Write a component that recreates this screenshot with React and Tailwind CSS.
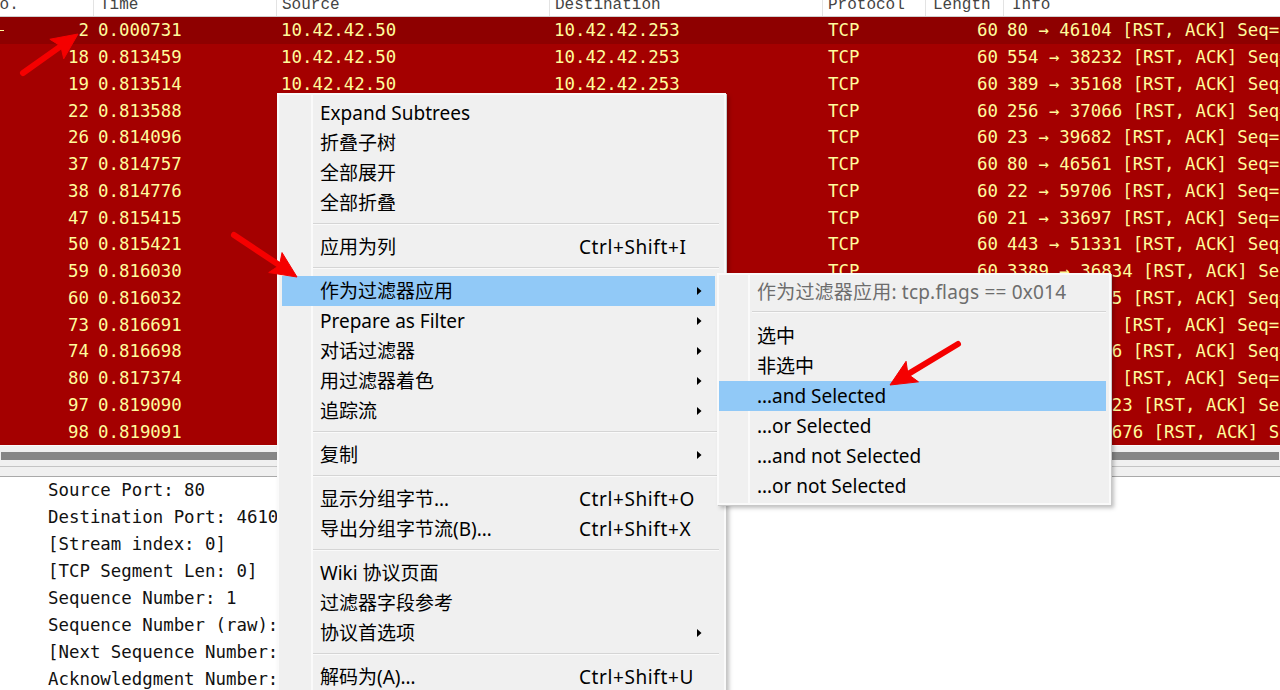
import clsx from "clsx";

const ROWS = [
  [2, "0.000731", "80 → 46104"],
  [18, "0.813459", "554 → 38232"],
  [19, "0.813514", "389 → 35168"],
  [22, "0.813588", "256 → 37066"],
  [26, "0.814096", "23 → 39682"],
  [37, "0.814757", "80 → 46561"],
  [38, "0.814776", "22 → 59706"],
  [47, "0.815415", "21 → 33697"],
  [50, "0.815421", "443 → 51331"],
  [59, "0.816030", "3389 → 36834"],
  [60, "0.816032", "139 → 40135"],
  [73, "0.816691", "80 → 52122"],
  [74, "0.816698", "443 → 53116"],
  [80, "0.817374", "22 → 47410"],
  [97, "0.819090", "8080 → 39823"],
  [98, "0.819091", "49152 → 34676"],
];

const DETAILS = [
  "Source Port: 80",
  "Destination Port: 46104",
  "[Stream index: 0]",
  "[TCP Segment Len: 0]",
  "Sequence Number: 1",
  "Sequence Number (raw): 3920817734",
  "[Next Sequence Number: 1]",
  "Acknowledgment Number: 1",
];

const MENU = [
  { label: "Expand Subtrees" },
  { label: "折叠子树" },
  { label: "全部展开" },
  { label: "全部折叠" },
  { sep: true },
  { label: "应用为列", shortcut: "Ctrl+Shift+I" },
  { sep: true },
  { label: "作为过滤器应用", sub: true, hl: true },
  { label: "Prepare as Filter", sub: true },
  { label: "对话过滤器", sub: true },
  { label: "用过滤器着色", sub: true },
  { label: "追踪流", sub: true },
  { sep: true },
  { label: "复制", sub: true },
  { sep: true },
  { label: "显示分组字节…", shortcut: "Ctrl+Shift+O" },
  { label: "导出分组字节流(B)…", shortcut: "Ctrl+Shift+X" },
  { sep: true },
  { label: "Wiki 协议页面" },
  { label: "过滤器字段参考" },
  { label: "协议首选项", sub: true },
  { sep: true },
  { label: "解码为(A)…", shortcut: "Ctrl+Shift+U" },
];

const SUBMENU = [
  { label: "作为过滤器应用: tcp.flags == 0x014", muted: true },
  { sep: true },
  { label: "选中" },
  { label: "非选中" },
  { label: "…and Selected", hl: true },
  { label: "…or Selected" },
  { label: "…and not Selected" },
  { label: "…or not Selected" },
];

const ARROWS = [
  [23, 73, 78, 34],
  [234, 235, 297, 277],
  [958, 344, 890, 385],
];

function arrowHead(x1, y1, x2, y2) {
  const dx = x2 - x1;
  const dy = y2 - y1;
  const len = Math.hypot(dx, dy);
  const ux = dx / len;
  const uy = dy / len;
  const hl = 26;
  const hw = 12;
  const bx = x2 - ux * hl;
  const by = y2 - uy * hl;
  const nx = x2 - ux * (hl - 5);
  const ny = y2 - uy * (hl - 5);
  return {
    base: [nx, ny],
    points: [
      [x2, y2],
      [bx - uy * hw, by + ux * hw],
      [nx, ny],
      [bx + uy * hw, by - ux * hw],
    ]
      .map((p) => p.join(","))
      .join(" "),
  };
}

function SubArrow() {
  return (
    <svg width="5" height="8" viewBox="0 0 5 8" className="shrink-0">
      <polygon points="0,0 4.5,4 0,8" fill="#000" />
    </svg>
  );
}

function MenuItem({ item }) {
  if (item.sep) {
    return (
      <div className="ml-[34px] mr-[5px] h-[14px] pt-[5px]">
        <div className="h-px bg-[#d5d5d5]" />
        <div className="h-px bg-[#fafafa]" />
      </div>
    );
  }
  return (
    <div
      className={clsx(
        "relative ml-[3px] mr-[9px] flex h-[30px] items-center pl-[38px] pr-[13px]",
        item.hl && "bg-[#91c9f7]"
      )}
    >
      <span className="w-[259px] whitespace-nowrap">{item.label}</span>
      {item.shortcut && (
        <span className="whitespace-nowrap tracking-[0.6px]">
          {item.shortcut}
        </span>
      )}
      {item.sub && (
        <span className="ml-auto">
          <SubArrow />
        </span>
      )}
    </div>
  );
}

function SubItem({ item }) {
  if (item.sep) {
    return (
      <div className="ml-[33px] mr-[3px] h-[14px] pt-[4px]">
        <div className="h-px bg-[#d5d5d5]" />
        <div className="h-px bg-[#fafafa]" />
      </div>
    );
  }
  return (
    <div
      className={clsx(
        "relative mr-[3px] flex h-[30px] items-center whitespace-nowrap pl-[38px]",
        item.hl && "bg-[#91c9f7]",
        item.muted && "text-[#6d6d6d] tracking-[0.2px]"
      )}
    >
      {item.label}
    </div>
  );
}

export default function App() {
  return (
    <div className="relative h-[690px] w-[1280px] overflow-hidden bg-white font-['Noto_Sans','Noto_Sans_CJK_SC',sans-serif]">
      {/* column header, scrolled so the text is cut at the top */}
      <div className="flex h-[17px] overflow-hidden border-b border-[#cfcfcf] bg-white font-['Liberation_Mono',monospace] text-[16px] leading-[16px] text-[#444]">
        <div className="w-[94px] shrink-0 border-r border-[#e3e3e3]">
          <div className="-mt-[3px] -ml-[10px]">No.</div>
        </div>
        <div className="w-[183px] shrink-0 border-r border-[#e3e3e3] pl-[6px]">
          <div className="-mt-[3px]">Time</div>
        </div>
        <div className="w-[273px] shrink-0 border-r border-[#e3e3e3] pl-[5px]">
          <div className="-mt-[3px]">Source</div>
        </div>
        <div className="w-[273px] shrink-0 border-r border-[#e3e3e3] pl-[5px]">
          <div className="-mt-[3px]">Destination</div>
        </div>
        <div className="w-[103px] shrink-0 border-r border-[#e3e3e3] pl-[5px]">
          <div className="-mt-[3px]">Protocol</div>
        </div>
        <div className="w-[78px] shrink-0 border-r border-[#e3e3e3] pl-[7px]">
          <div className="-mt-[3px]">Length</div>
        </div>
        <div className="flex-1 pl-[8px]">
          <div className="-mt-[3px]">Info</div>
        </div>
      </div>

      {/* packet list */}
      <div className="font-['DejaVu_Sans_Mono',monospace] text-[17.4px] text-[#fffc9c]">
        {ROWS.map(([no, time, ports], i) => (
          <div
            key={no}
            className={clsx(
              "relative flex h-[26.75px] items-center whitespace-nowrap",
              i === 0 ? "bg-[#8e0000]" : "bg-[#a40000]"
            )}
          >
            {i === 0 && (
              <div className="absolute left-0 top-[13px] h-px w-[4px] bg-[#fffc9c]" />
            )}
            <div className="w-[94px] shrink-0 pr-[5px] text-right">{no}</div>
            <div className="w-[183px] shrink-0 pl-[4px]">{time}</div>
            <div className="w-[273px] shrink-0 pl-[4px]">10.42.42.50</div>
            <div className="w-[273px] shrink-0 pl-[4px]">10.42.42.253</div>
            <div className="w-[103px] shrink-0 pl-[5px]">TCP</div>
            <div className="w-[78px] shrink-0 pr-[6px] text-right">60</div>
            <div className="min-w-0 flex-1 overflow-hidden pl-[3px]">
              {ports} [RST, ACK] Seq=1 Ack=1 Win=0 Len=0
            </div>
          </div>
        ))}
      </div>

      {/* horizontal scrollbar + splitter */}
      <div className="flex h-[32px] flex-col bg-[#f0f0f0]">
        <div className="h-[7px] border-t border-[#fafafa]" />
        <div className="mx-[1px] h-[8px] bg-[#868686]" />
        <div className="h-[6px]" />
        <div className="h-px bg-[#c4c4c4]" />
        <div className="h-[9px]" />
        <div className="h-px bg-[#a9a9a9]" />
      </div>

      {/* packet details */}
      <div className="pl-[48px] font-['DejaVu_Sans_Mono',monospace] text-[17.4px] text-[#111]">
        {DETAILS.map((d) => (
          <div key={d} className="h-[27px] whitespace-pre leading-[27px]">
            {d}
          </div>
        ))}
      </div>

      {/* context menu */}
      <div className="absolute left-[277px] top-[93px] h-[620px] w-[449px] border-2 border-[#fafafa] bg-[#f0f0f0] pt-[3px] text-[19px] text-black shadow-[1px_1px_0_#c8c8c8,3px_3px_4px_rgba(0,0,0,0.25)]">
        <div className="absolute bottom-0 left-[32px] top-0 w-[2px] bg-[#fafafa]" />
        {MENU.map((item, i) => (
          <MenuItem key={i} item={item} />
        ))}
      </div>

      {/* submenu */}
      <div className="absolute left-[717px] top-[273px] w-[394px] border-2 border-[#fafafa] bg-[#f0f0f0] pb-[2px] pt-[2px] text-[19px] text-black shadow-[1px_1px_0_#c8c8c8,3px_3px_4px_rgba(0,0,0,0.25)]">
        <div className="absolute bottom-0 left-[29px] top-0 w-[2px] bg-[#fafafa]" />
        {SUBMENU.map((item, i) => (
          <SubItem key={i} item={item} />
        ))}
      </div>

      {/* red annotation arrows */}
      <svg
        className="pointer-events-none absolute left-0 top-0"
        width="1280"
        height="690"
      >
        {ARROWS.map(([x1, y1, x2, y2], i) => {
          const h = arrowHead(x1, y1, x2, y2);
          return (
            <g key={i} fill="#f50000" stroke="#f50000">
              <line
                x1={x1}
                y1={y1}
                x2={h.base[0]}
                y2={h.base[1]}
                strokeWidth="6"
                strokeLinecap="round"
              />
              <polygon points={h.points} strokeWidth="1" strokeLinejoin="round" />
            </g>
          );
        })}
      </svg>
    </div>
  );
}
